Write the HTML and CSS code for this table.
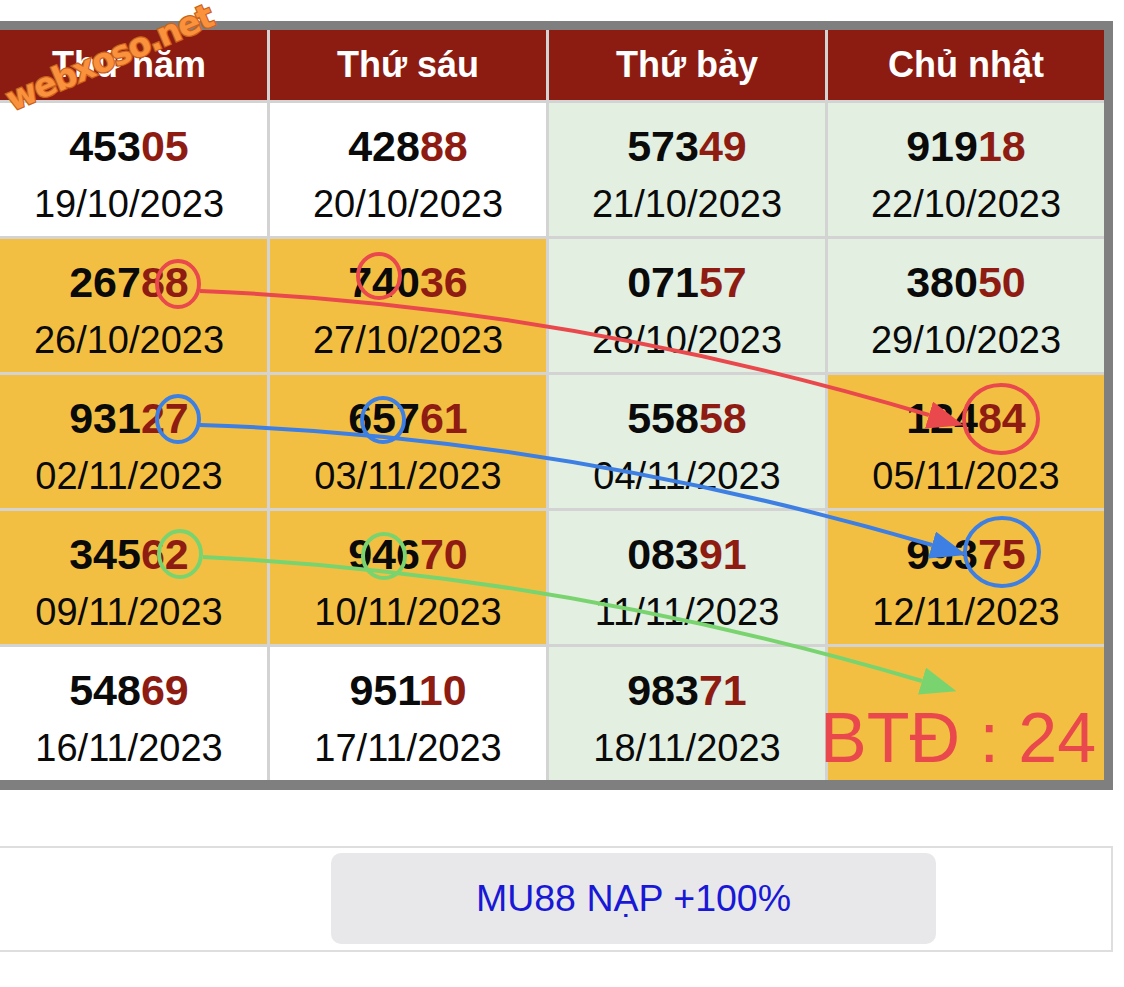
FILE: index.html
```html
<!DOCTYPE html>
<html lang="vi">
<head>
<meta charset="utf-8">
<title>Bảng đặc biệt tuần</title>
<link rel="stylesheet" href="styles.css">
</head>
<body>
<div class="page">
  <div class="board">
    <div class="cell head">Thứ năm</div>
    <div class="cell head">Thứ sáu</div>
    <div class="cell head">Thứ bảy</div>
    <div class="cell head">Chủ nhật</div>

    <div class="cell white"><div class="num">453<span class="tail">05</span></div><div class="date">19/10/2023</div></div>
    <div class="cell white"><div class="num">428<span class="tail">88</span></div><div class="date">20/10/2023</div></div>
    <div class="cell green"><div class="num">573<span class="tail">49</span></div><div class="date">21/10/2023</div></div>
    <div class="cell green"><div class="num">919<span class="tail">18</span></div><div class="date">22/10/2023</div></div>

    <div class="cell yellow"><div class="num">267<span class="tail">88</span></div><div class="date">26/10/2023</div></div>
    <div class="cell yellow"><div class="num">740<span class="tail">36</span></div><div class="date">27/10/2023</div></div>
    <div class="cell green"><div class="num">071<span class="tail">57</span></div><div class="date">28/10/2023</div></div>
    <div class="cell green"><div class="num">380<span class="tail">50</span></div><div class="date">29/10/2023</div></div>

    <div class="cell yellow"><div class="num">931<span class="tail">27</span></div><div class="date">02/11/2023</div></div>
    <div class="cell yellow"><div class="num">657<span class="tail">61</span></div><div class="date">03/11/2023</div></div>
    <div class="cell green"><div class="num">558<span class="tail">58</span></div><div class="date">04/11/2023</div></div>
    <div class="cell yellow"><div class="num">124<span class="tail">84</span></div><div class="date">05/11/2023</div></div>

    <div class="cell yellow"><div class="num">345<span class="tail">62</span></div><div class="date">09/11/2023</div></div>
    <div class="cell yellow"><div class="num">946<span class="tail">70</span></div><div class="date">10/11/2023</div></div>
    <div class="cell green"><div class="num">083<span class="tail">91</span></div><div class="date">11/11/2023</div></div>
    <div class="cell yellow"><div class="num">993<span class="tail">75</span></div><div class="date">12/11/2023</div></div>

    <div class="cell white"><div class="num">548<span class="tail">69</span></div><div class="date">16/11/2023</div></div>
    <div class="cell white"><div class="num">951<span class="tail">10</span></div><div class="date">17/11/2023</div></div>
    <div class="cell green"><div class="num">983<span class="tail">71</span></div><div class="date">18/11/2023</div></div>
    <div class="cell yellow"></div>
  </div>

  <div class="promo">
    <a class="promo-btn" href="#">MU88 NẠP +100%</a>
  </div>

  <div class="watermark">webxoso.net</div>

  <svg class="marks" width="1124" height="987" viewBox="0 0 1124 987" xmlns="http://www.w3.org/2000/svg">
    <defs>
      <marker id="head-red" viewBox="0 0 36 28" refX="0" refY="14" markerWidth="36" markerHeight="28" orient="auto" markerUnits="userSpaceOnUse">
        <path d="M0 0 L36 14 L0 28 Z" fill="#e9494c"/>
      </marker>
      <marker id="head-blue" viewBox="0 0 36 28" refX="0" refY="14" markerWidth="36" markerHeight="28" orient="auto" markerUnits="userSpaceOnUse">
        <path d="M0 0 L36 14 L0 28 Z" fill="#3d7fe3"/>
      </marker>
      <marker id="head-green" viewBox="0 0 36 28" refX="0" refY="14" markerWidth="36" markerHeight="28" orient="auto" markerUnits="userSpaceOnUse">
        <path d="M0 0 L36 14 L0 28 Z" fill="#79d46f"/>
      </marker>
    </defs>

    <g fill="none" stroke-width="4">
      <ellipse cx="178" cy="284" rx="21" ry="23" stroke="#e9494c"/>
      <ellipse cx="379" cy="276" rx="21" ry="22" stroke="#e9494c"/>
      <ellipse cx="1001" cy="419" rx="37" ry="34" stroke="#e9494c"/>
      <path d="M200 291 Q560 305 929 415" stroke="#e9494c" marker-end="url(#head-red)"/>

      <ellipse cx="178" cy="419" rx="21" ry="23" stroke="#3d7fe3"/>
      <ellipse cx="383" cy="420" rx="21" ry="22" stroke="#3d7fe3"/>
      <ellipse cx="1002" cy="552" rx="37" ry="34" stroke="#3d7fe3"/>
      <path d="M200 425 Q560 436 932 545" stroke="#3d7fe3" marker-end="url(#head-blue)"/>

      <ellipse cx="180" cy="554" rx="21" ry="23" stroke="#79d46f"/>
      <ellipse cx="384" cy="556" rx="21" ry="22" stroke="#79d46f"/>
      <path d="M203 557 Q560 574 922 681" stroke="#79d46f" marker-end="url(#head-green)"/>
    </g>

    <text class="btd" x="820" y="762">BTĐ : 24</text>
  </svg>
</div>
</body>
</html>
```

FILE: styles.css
```css
html, body {
  margin: 0;
  padding: 0;
  background: #ffffff;
}

body {
  font-family: "Liberation Sans", Arial, Helvetica, sans-serif;
  overflow: hidden;
}

.page {
  position: relative;
  width: 1124px;
  height: 987px;
  padding-top: 21px;
  box-sizing: border-box;
  overflow: hidden;
}

.board {
  display: grid;
  grid-template-columns: repeat(4, 276px);
  grid-template-rows: 70px repeat(5, 133px);
  gap: 3px;
  width: max-content;
  margin-left: -18px;
  border: 9px solid #7f7f7f;
  border-bottom-width: 10px;
  background: #d3d3d3;
}

.cell {
  display: flex;
  flex-direction: column;
  align-items: center;
  box-sizing: border-box;
}

.head {
  justify-content: center;
  background: #8c1c12;
  color: #ffffff;
  font-weight: bold;
  font-size: 36px;
}

.white { background: #ffffff; }
.green { background: #e3efe1; }
.yellow { background: #f3bf43; }

.num {
  margin-top: 17px;
  font-size: 43px;
  line-height: 52px;
  font-weight: bold;
  color: #0a0a0a;
}

.tail {
  color: #8e1c12;
}

.date {
  margin-top: 10px;
  font-size: 38px;
  line-height: 44px;
  color: #0a0a0a;
}

.promo {
  margin-top: 56px;
  margin-left: -9px;
  width: 1122px;
  height: 106px;
  box-sizing: border-box;
  border: 2px solid #dedede;
  padding: 5px 0 0 338px;
}

.promo-btn {
  display: flex;
  align-items: center;
  justify-content: center;
  width: 605px;
  height: 91px;
  border-radius: 10px;
  background: #e8e8ea;
  color: #1818d6;
  font-size: 37.5px;
  text-decoration: none;
}

.watermark {
  position: absolute;
  left: -1px;
  top: 38px;
  font-family: "DejaVu Sans", sans-serif;
  font-weight: bold;
  font-size: 33px;
  letter-spacing: -1.5px;
  color: #fa913c;
  -webkit-text-stroke: 2.5px #c9621c;
  paint-order: stroke fill;
  white-space: nowrap;
  transform: rotate(-23deg);
  transform-origin: center;
}

.marks {
  position: absolute;
  left: 0;
  top: 0;
  pointer-events: none;
}

.btd {
  font-family: "Liberation Sans", Arial, sans-serif;
  font-size: 70px;
  fill: #e9494c;
}
```
